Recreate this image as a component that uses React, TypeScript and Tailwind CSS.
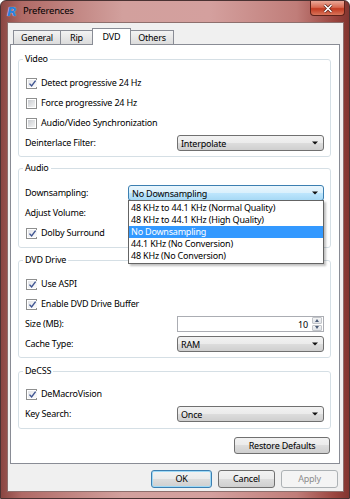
import React from "react";

function Check({ checked }: { checked?: boolean }) {
  return (
    <span className="w-[11px] h-[11px] shrink-0 border border-[#8e8f8f] bg-white p-[1px] flex">
      <span
        className={`flex-1 flex items-center justify-center ${
          checked
            ? "bg-[linear-gradient(135deg,#e4e6ea,#fbfbfb)]"
            : "bg-[linear-gradient(135deg,#c9ccd1,#f4f4f4)]"
        }`}
      >
        {checked && (
          <svg width="9" height="9" viewBox="0 0 9 9">
            <path d="M1.5 4.6 L3.6 7 L7.6 1.6" fill="none" stroke="#3e5491" strokeWidth="1.4" />
          </svg>
        )}
      </span>
    </span>
  );
}

function CheckRow({ label, checked }: { label: string; checked?: boolean }) {
  return (
    <div className="h-[20px] flex items-center gap-[4px] pl-[1px]">
      <Check checked={checked} />
      <span>{label}</span>
    </div>
  );
}

function Arrow() {
  return (
    <svg width="6" height="4" viewBox="0 0 6 4" className="shrink-0">
      <path d="M0 0.5 H6 L3 3.5 Z" fill="#111" />
    </svg>
  );
}

function Combo({
  value,
  focused,
  width,
  children,
}: {
  value: string;
  focused?: boolean;
  width: string;
  children?: React.ReactNode;
}) {
  return (
    <div
      className={`relative ${width} h-[16px] rounded-[3px] border flex items-center pl-[3px] pr-[5px] ${
        focused
          ? "border-[#3c7fb1] bg-[linear-gradient(180deg,#eaf6fd_0%,#d9f0fc_50%,#bee6fd_50%,#a7d9f5_100%)]"
          : "border-[#707070] bg-[linear-gradient(180deg,#f2f2f2_0%,#ebebeb_50%,#dddddd_50%,#cfcfcf_100%)]"
      }`}
    >
      <span className="flex-1 leading-none">{value}</span>
      <Arrow />
      {children}
    </div>
  );
}

function FieldRow({ label, children }: { label: string; children?: React.ReactNode }) {
  return (
    <div className="h-[20px] flex items-center justify-between">
      <span>{label}</span>
      {children}
    </div>
  );
}

function Group({
  title,
  className,
  children,
}: {
  title: string;
  className: string;
  children: React.ReactNode;
}) {
  return (
    <fieldset className={`border border-[#d5dfe5] rounded-[3px] px-[6px] ${className}`}>
      <legend className="px-[2px] -ml-[2px] leading-[14px]">{title}</legend>
      {children}
    </fieldset>
  );
}

function Button({
  label,
  width,
  primary,
  disabled,
  height = "h-[18px]",
}: {
  label: string;
  width: string;
  primary?: boolean;
  disabled?: boolean;
  height?: string;
}) {
  return (
    <div
      className={`${width} ${height} rounded-[3px] border flex items-center justify-center ${
        disabled
          ? "border-[#adb2b5] bg-[#f4f4f4] text-[#8d8d8d]"
          : primary
          ? "border-[#3c7fb1] bg-[linear-gradient(180deg,#f2f2f2_0%,#ebebeb_50%,#dddddd_50%,#cfcfcf_100%)] shadow-[inset_0_0_0_1px_#9ed9f6]"
          : "border-[#707070] bg-[linear-gradient(180deg,#f2f2f2_0%,#ebebeb_50%,#dddddd_50%,#cfcfcf_100%)]"
      }`}
    >
      {label}
    </div>
  );
}

const options = [
  "48 KHz to 44.1 KHz (Normal Quality)",
  "48 KHz to 44.1 KHz (High Quality)",
  "No Downsampling",
  "44.1 KHz (No Conversion)",
  "48 KHz (No Conversion)",
];

export default function App() {
  return (
    <div className="w-[350px] h-[499px] flex flex-col overflow-hidden rounded-t-[6px] border border-[#4a3232] bg-[linear-gradient(90deg,#8a4642_0%,#b06a66_6%,#d2a09d_35%,#d4a09e_60%,#c07d79_85%,#9a443e_96%,#823530_100%)] font-['Noto_Sans',sans-serif] text-[9px] tracking-[-0.2px] text-black">
      {/* title bar */}
      <div className="h-[21px] shrink-0 flex items-start">
        <div className="flex items-center gap-[5px] pl-[5px] pt-[4px]">
          <span className="w-[12px] h-[12px] flex items-center justify-center font-['DejaVu_Sans',sans-serif] font-bold italic text-[13px] leading-none text-[#2b7fd9] [text-shadow:0_0_1px_#fff]">
            R
          </span>
          <span className="text-[9.5px] leading-none text-black">Preferences</span>
        </div>
        <div className="ml-auto mr-[4px] w-[35px] h-[15px] rounded-b-[4px] border border-t-0 border-[#5e2219] bg-[linear-gradient(180deg,#eaa898_0%,#d86a52_45%,#c23a20_55%,#d8745a_100%)] flex items-center justify-center">
          <svg width="10" height="9" viewBox="0 0 10 9">
            <path d="M1.5 1 L8.5 8 M8.5 1 L1.5 8" stroke="#5a2018" strokeWidth="3" />
            <path d="M1.5 1 L8.5 8 M8.5 1 L1.5 8" stroke="#fff" strokeWidth="1.6" />
          </svg>
        </div>
      </div>

      {/* client area */}
      <div className="flex-1 ml-[6px] mr-[5px] mb-[6px] bg-[#f0f0f0] border border-[#8e6f6d] flex flex-col pl-[2px] pr-[3px]">
        {/* tabs */}
        <div className="h-[17px] mt-[4px] pl-[3px] flex items-end relative z-10">
          <div className="w-[48px] h-[14px] border border-b-0 border-[#898c95] bg-[linear-gradient(180deg,#f3f3f3,#dcdcdc)] flex items-center justify-center">
            General
          </div>
          <div className="w-[33px] h-[14px] -ml-px border border-b-0 border-[#898c95] bg-[linear-gradient(180deg,#f3f3f3,#dcdcdc)] flex items-center justify-center">
            Rip
          </div>
          <div className="w-[39px] h-[17px] -ml-px -mb-px border border-b-0 border-[#898c95] bg-white flex items-center justify-center pb-[1px]">
            DVD
          </div>
          <div className="w-[44px] h-[14px] -ml-px border border-b-0 border-[#898c95] bg-[linear-gradient(180deg,#f3f3f3,#dcdcdc)] flex items-center justify-center">
            Others
          </div>
        </div>

        {/* tab panel */}
        <div className="bg-white border border-[#898c95] pl-[7px] pr-[8px] pt-[7px] pb-[9px] flex flex-col">
          <Group title="Video" className="pt-[7px] pb-[3px]">
            <CheckRow label="Detect progressive 24 Hz" checked />
            <CheckRow label="Force progressive 24 Hz" />
            <CheckRow label="Audio/Video Synchronization" />
            <FieldRow label="Deinterlace Filter:">
              <Combo value="Interpolate" width="w-[147px]" />
            </FieldRow>
          </Group>

          <Group title="Audio" className="mt-[4px] pt-[8px] pb-[4px]">
            <FieldRow label="Downsampling:">
              <Combo value="No Downsampling" width="w-[196px]" focused>
                <div className="absolute left-[-1px] right-[-1px] top-[14px] z-20 bg-white border border-[#646464] py-[1px] shadow-[2px_2px_2px_rgba(0,0,0,0.25)]">
                  {options.map((o) => (
                    <div
                      key={o}
                      className={`h-[12px] flex items-center pl-[2px] ${
                        o === "No Downsampling" ? "bg-[#3399ff] text-white" : ""
                      }`}
                    >
                      {o}
                    </div>
                  ))}
                </div>
              </Combo>
            </FieldRow>
            <FieldRow label="Adjust Volume:" />
            <CheckRow label="Dolby Surround" checked />
          </Group>

          <Group title="DVD Drive" className="mt-[5px] pt-[7px] pb-[3px]">
            <CheckRow label="Use ASPI" checked />
            <CheckRow label="Enable DVD Drive Buffer" checked />
            <FieldRow label="Size (MB):">
              <div className="w-[147px] h-[16px] border border-[#abadb3] bg-white flex items-center">
                <span className="flex-1 text-right pr-[4px] leading-none">10</span>
                <div className="w-[10px] h-[14px] mr-[1px] flex flex-col gap-px">
                  <div className="flex-1 border border-[#c2c5ca] rounded-[1px] bg-[linear-gradient(180deg,#f4f4f4,#dfe3e8)] flex items-center justify-center">
                    <svg width="4" height="3" viewBox="0 0 4 3">
                      <path d="M0 3 H4 L2 0 Z" fill="#4b5c78" />
                    </svg>
                  </div>
                  <div className="flex-1 border border-[#c2c5ca] rounded-[1px] bg-[linear-gradient(180deg,#f4f4f4,#dfe3e8)] flex items-center justify-center">
                    <svg width="4" height="3" viewBox="0 0 4 3">
                      <path d="M0 0 H4 L2 3 Z" fill="#4b5c78" />
                    </svg>
                  </div>
                </div>
              </div>
            </FieldRow>
            <FieldRow label="Cache Type:">
              <Combo value="RAM" width="w-[147px]" />
            </FieldRow>
          </Group>

          <Group title="DeCSS" className="mt-[6px] pt-[6px] pb-[4px]">
            <CheckRow label="DeMacroVision" checked />
            <FieldRow label="Key Search:">
              <Combo value="Once" width="w-[147px]" />
            </FieldRow>
          </Group>

          <div className="mt-[8px] flex justify-end pr-[1px]">
            <Button label="Restore Defaults" width="w-[96px]" height="h-[17px]" />
          </div>
        </div>

        {/* dialog buttons */}
        <div className="mt-[6px] flex justify-end gap-[6px] pr-[2px]">
          <Button label="OK" width="w-[61px]" primary />
          <Button label="Cancel" width="w-[57px]" />
          <Button label="Apply" width="w-[57px]" disabled />
        </div>
      </div>
    </div>
  );
}
